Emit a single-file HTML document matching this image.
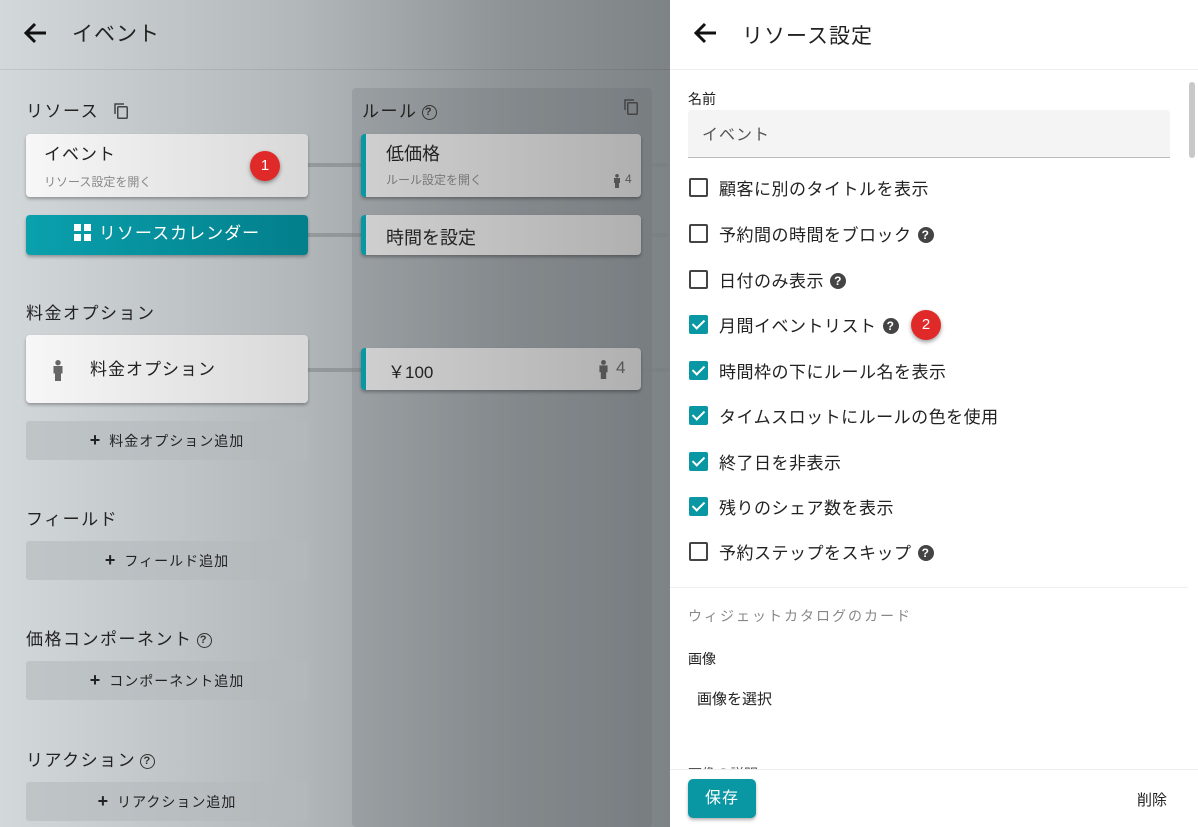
<!DOCTYPE html>
<html><head><meta charset="utf-8"><style>
*{box-sizing:border-box;margin:0;padding:0}
body{width:1198px;height:827px;overflow:hidden;position:relative;font-family:"Liberation Sans","Noto Sans CJK JP",sans-serif;color:#222;background:#fff}
.a{position:absolute}
#left{left:0;top:0;width:670px;height:827px;background:linear-gradient(90deg,#d3d8db 0%,#b2b7ba 45%,#8f9497 75%,#7e8386 100%)}
.card{position:absolute;border-radius:4px;box-shadow:0 2px 3px rgba(0,0,0,.3);background:linear-gradient(90deg,#f7f7f7,#d8d8d8)}
.rcard{position:absolute;border-radius:4px;box-shadow:0 2px 3px rgba(0,0,0,.3);background:linear-gradient(90deg,#cfcfcf,#b0b0b0);border-left:5px solid #0897a3}
.btn{position:absolute;left:26px;width:282px;height:39px;border-radius:3px;background:rgba(180,185,188,.6);font-size:14px;text-align:center;line-height:39px;color:#222;letter-spacing:1px}
.btn b{font-size:18px;margin-right:8px}
.h{position:absolute;left:26px;font-size:17px;letter-spacing:1.5px;color:#222}
.line{position:absolute;height:4px;background:rgba(120,125,128,.5)}
.q{display:inline-block;width:16px;height:16px;border-radius:50%;background:#444;color:#fff;font-size:12px;font-weight:bold;text-align:center;line-height:16px;vertical-align:2px;margin-left:6px}
.qo{display:inline-block;width:15px;height:15px;border-radius:50%;border:1.5px solid #333;color:#333;font-size:11px;font-weight:bold;text-align:center;line-height:12px;vertical-align:2px;margin-left:4px}
.cb{position:absolute;left:689px;width:19px;height:19px;border:2px solid #444;border-radius:2px}
.cb.on{background:#0897a3;border-color:#0897a3}
.cb.on:after{content:"";position:absolute;left:4px;top:0px;width:5px;height:10px;border:solid #fff;border-width:0 2.5px 2.5px 0;transform:rotate(45deg)}
.lb{position:absolute;left:719px;font-size:17px;color:#222;letter-spacing:.5px}
.badge{position:absolute;width:30px;height:30px;border-radius:50%;background:#e02a2a;color:#fff;text-align:center;line-height:30px;font-size:15px;box-shadow:0 2px 4px rgba(0,0,0,.4)}
.copy{position:absolute;width:16px;height:17px}
</style></head><body>
<div id="left" class="a">
<div class="a" style="left:0;top:69px;width:670px;height:1px;background:rgba(0,0,0,.08)"></div>
<svg class="a" style="left:22px;top:21px" width="26" height="24" viewBox="0 0 26 24"><path d="M24 12H4M13 3L4 12l9 9" stroke="#111" stroke-width="3" fill="none"/></svg>
<div class="a" style="left:72px;top:18px;font-size:21px;letter-spacing:1px">イベント</div>

<div class="a" style="left:352px;top:88px;width:300px;height:739px;background:rgba(90,95,98,.18);border-radius:4px"></div>

<div class="h" style="top:97px">リソース</div>
<svg class="copy" style="left:113px;top:102px" viewBox="0 0 16 17"><path d="M2 12V2h9" stroke="#444" stroke-width="1.5" fill="none"/><rect x="4.75" y="4.75" width="9.5" height="11.5" rx="1" stroke="#444" stroke-width="1.5" fill="none"/></svg>
<div class="a" style="left:362px;top:97px;font-size:17px;letter-spacing:1.5px">ルール<span class="qo">?</span></div>
<svg class="copy" style="left:623px;top:98px" viewBox="0 0 16 17"><path d="M2 12V2h9" stroke="#444" stroke-width="1.5" fill="none"/><rect x="4.75" y="4.75" width="9.5" height="11.5" rx="1" stroke="#444" stroke-width="1.5" fill="none"/></svg>

<div class="line" style="left:308px;top:163px;width:54px"></div>
<div class="line" style="left:308px;top:233px;width:54px"></div>
<div class="line" style="left:308px;top:368px;width:54px"></div>
<div class="line" style="left:641px;top:163px;width:29px"></div>
<div class="line" style="left:641px;top:233px;width:29px"></div>
<div class="line" style="left:641px;top:368px;width:29px"></div>

<div class="card" style="left:26px;top:134px;width:282px;height:63px">
 <div class="a" style="left:18px;top:6px;font-size:17px;letter-spacing:1px">イベント</div>
 <div class="a" style="left:18px;top:39px;font-size:12px;color:#888">リソース設定を開く</div>
</div>
<div class="badge" style="left:250px;top:151px">1</div>

<div class="a" style="left:26px;top:215px;width:282px;height:40px;border-radius:4px;background:linear-gradient(90deg,#0aa0ad,#027f8b);box-shadow:0 2px 3px rgba(0,0,0,.3);color:#fff;font-size:17px;line-height:38px;text-align:center;letter-spacing:1px">
<span style="display:inline-block;width:17px;height:17px;vertical-align:-2px;margin-right:8px;background:linear-gradient(#fff,#fff) 0 0/7px 7px no-repeat,linear-gradient(#fff,#fff) 10px 0/7px 7px no-repeat,linear-gradient(#fff,#fff) 0 10px/7px 7px no-repeat,linear-gradient(#fff,#fff) 10px 10px/7px 7px no-repeat"></span>リソースカレンダー</div>

<div class="rcard" style="left:361px;top:134px;width:280px;height:63px">
 <div class="a" style="left:20px;top:6px;font-size:18px">低価格</div>
 <div class="a" style="left:20px;top:37px;font-size:12px;color:#777">ルール設定を開く</div>
 <svg class="a" style="left:247px;top:40px" width="8" height="14" viewBox="0 0 8 14"><circle cx="4" cy="1.8" r="1.8" fill="#555"/><path d="M1 4h6v5H6v5H2V9H1z" fill="#555"/></svg>
 <div class="a" style="left:259px;top:38px;font-size:12px;color:#555">4</div>
</div>
<div class="rcard" style="left:361px;top:215px;width:280px;height:40px">
 <div class="a" style="left:20px;top:9px;font-size:18px">時間を設定</div>
</div>

<div class="h" style="top:299px">料金オプション</div>
<div class="card" style="left:26px;top:335px;width:282px;height:68px">
 <svg class="a" style="left:26px;top:25px" width="12" height="21" viewBox="0 0 8 14"><circle cx="4" cy="1.8" r="1.8" fill="#666"/><path d="M1 4h6v5H6v5H2V9H1z" fill="#666"/></svg>
 <div class="a" style="left:64px;top:20px;font-size:17px;letter-spacing:1px">料金オプション</div>
</div>
<div class="rcard" style="left:361px;top:348px;width:280px;height:42px">
 <div class="a" style="left:22px;top:10px;font-size:17px">￥100</div>
 <svg class="a" style="left:232px;top:12px" width="11" height="19" viewBox="0 0 8 14"><circle cx="4" cy="1.8" r="1.8" fill="#555"/><path d="M1 4h6v5H6v5H2V9H1z" fill="#555"/></svg>
 <div class="a" style="left:250px;top:10px;font-size:17px;color:#555">4</div>
</div>
<div class="btn" style="top:421px"><b>+</b>料金オプション追加</div>

<div class="h" style="top:505px">フィールド</div>
<div class="btn" style="top:541px"><b>+</b>フィールド追加</div>
<div class="h" style="top:625px">価格コンポーネント<span class="qo">?</span></div>
<div class="btn" style="top:661px"><b>+</b>コンポーネント追加</div>
<div class="h" style="top:746px">リアクション<span class="qo">?</span></div>
<div class="btn" style="top:782px"><b>+</b>リアクション追加</div>
</div>

<!-- right panel -->
<div class="a" style="left:670px;top:0;width:528px;height:827px;background:#fff"></div>
<svg class="a" style="left:692px;top:21px" width="26" height="24" viewBox="0 0 26 24"><path d="M24 12H4M13 3L4 12l9 9" stroke="#111" stroke-width="3" fill="none"/></svg>
<div class="a" style="left:742px;top:20px;font-size:21px;letter-spacing:1px">リソース設定</div>
<div class="a" style="left:670px;top:69px;width:528px;height:1px;background:#eee"></div>
<div class="a" style="left:1189px;top:82px;width:6px;height:76px;border-radius:3px;background:#c8c8c8"></div>

<div class="a" style="left:688px;top:89px;font-size:14px">名前</div>
<div class="a" style="left:688px;top:110px;width:482px;height:48px;background:#f4f4f4;border-bottom:1px solid #bbb;border-radius:4px 4px 0 0;font-size:16px;color:#555;padding:11px 14px;letter-spacing:1px">イベント</div>

<div class="cb" style="top:178px"></div><div class="lb" style="top:175px">顧客に別のタイトルを表示</div>
<div class="cb" style="top:224px"></div><div class="lb" style="top:221px">予約間の時間をブロック<span class="q">?</span></div>
<div class="cb" style="top:270px"></div><div class="lb" style="top:267px">日付のみ表示<span class="q">?</span></div>
<div class="cb on" style="top:315px"></div><div class="lb" style="top:312px">月間イベントリスト<span class="q">?</span></div>
<div class="badge" style="left:911px;top:310px">2</div>
<div class="cb on" style="top:361px"></div><div class="lb" style="top:358px">時間枠の下にルール名を表示</div>
<div class="cb on" style="top:406px"></div><div class="lb" style="top:403px">タイムスロットにルールの色を使用</div>
<div class="cb on" style="top:452px"></div><div class="lb" style="top:449px">終了日を非表示</div>
<div class="cb on" style="top:497px"></div><div class="lb" style="top:494px">残りのシェア数を表示</div>
<div class="cb" style="top:542px"></div><div class="lb" style="top:539px">予約ステップをスキップ<span class="q">?</span></div>

<div class="a" style="left:670px;top:587px;width:518px;height:1px;background:#eee"></div>
<div class="a" style="left:688px;top:606px;font-size:14px;color:#888;letter-spacing:2px">ウィジェットカタログのカード</div>
<div class="a" style="left:688px;top:649px;font-size:14px">画像</div>
<div class="a" style="left:697px;top:688px;font-size:15px">画像を選択</div>
<div class="a" style="left:688px;top:764px;font-size:14px;color:#555;height:5px;overflow:hidden">画像の説明</div>
<div class="a" style="left:670px;top:769px;width:528px;height:1px;background:#eee"></div>
<div class="a" style="left:688px;top:779px;width:68px;height:39px;border-radius:5px;background:#0897a3;color:#fff;font-size:16px;text-align:center;line-height:39px;box-shadow:0 2px 3px rgba(0,0,0,.3);letter-spacing:1px">保存</div>
<div class="a" style="left:1137px;top:789px;font-size:15px">削除</div>
</body></html>
